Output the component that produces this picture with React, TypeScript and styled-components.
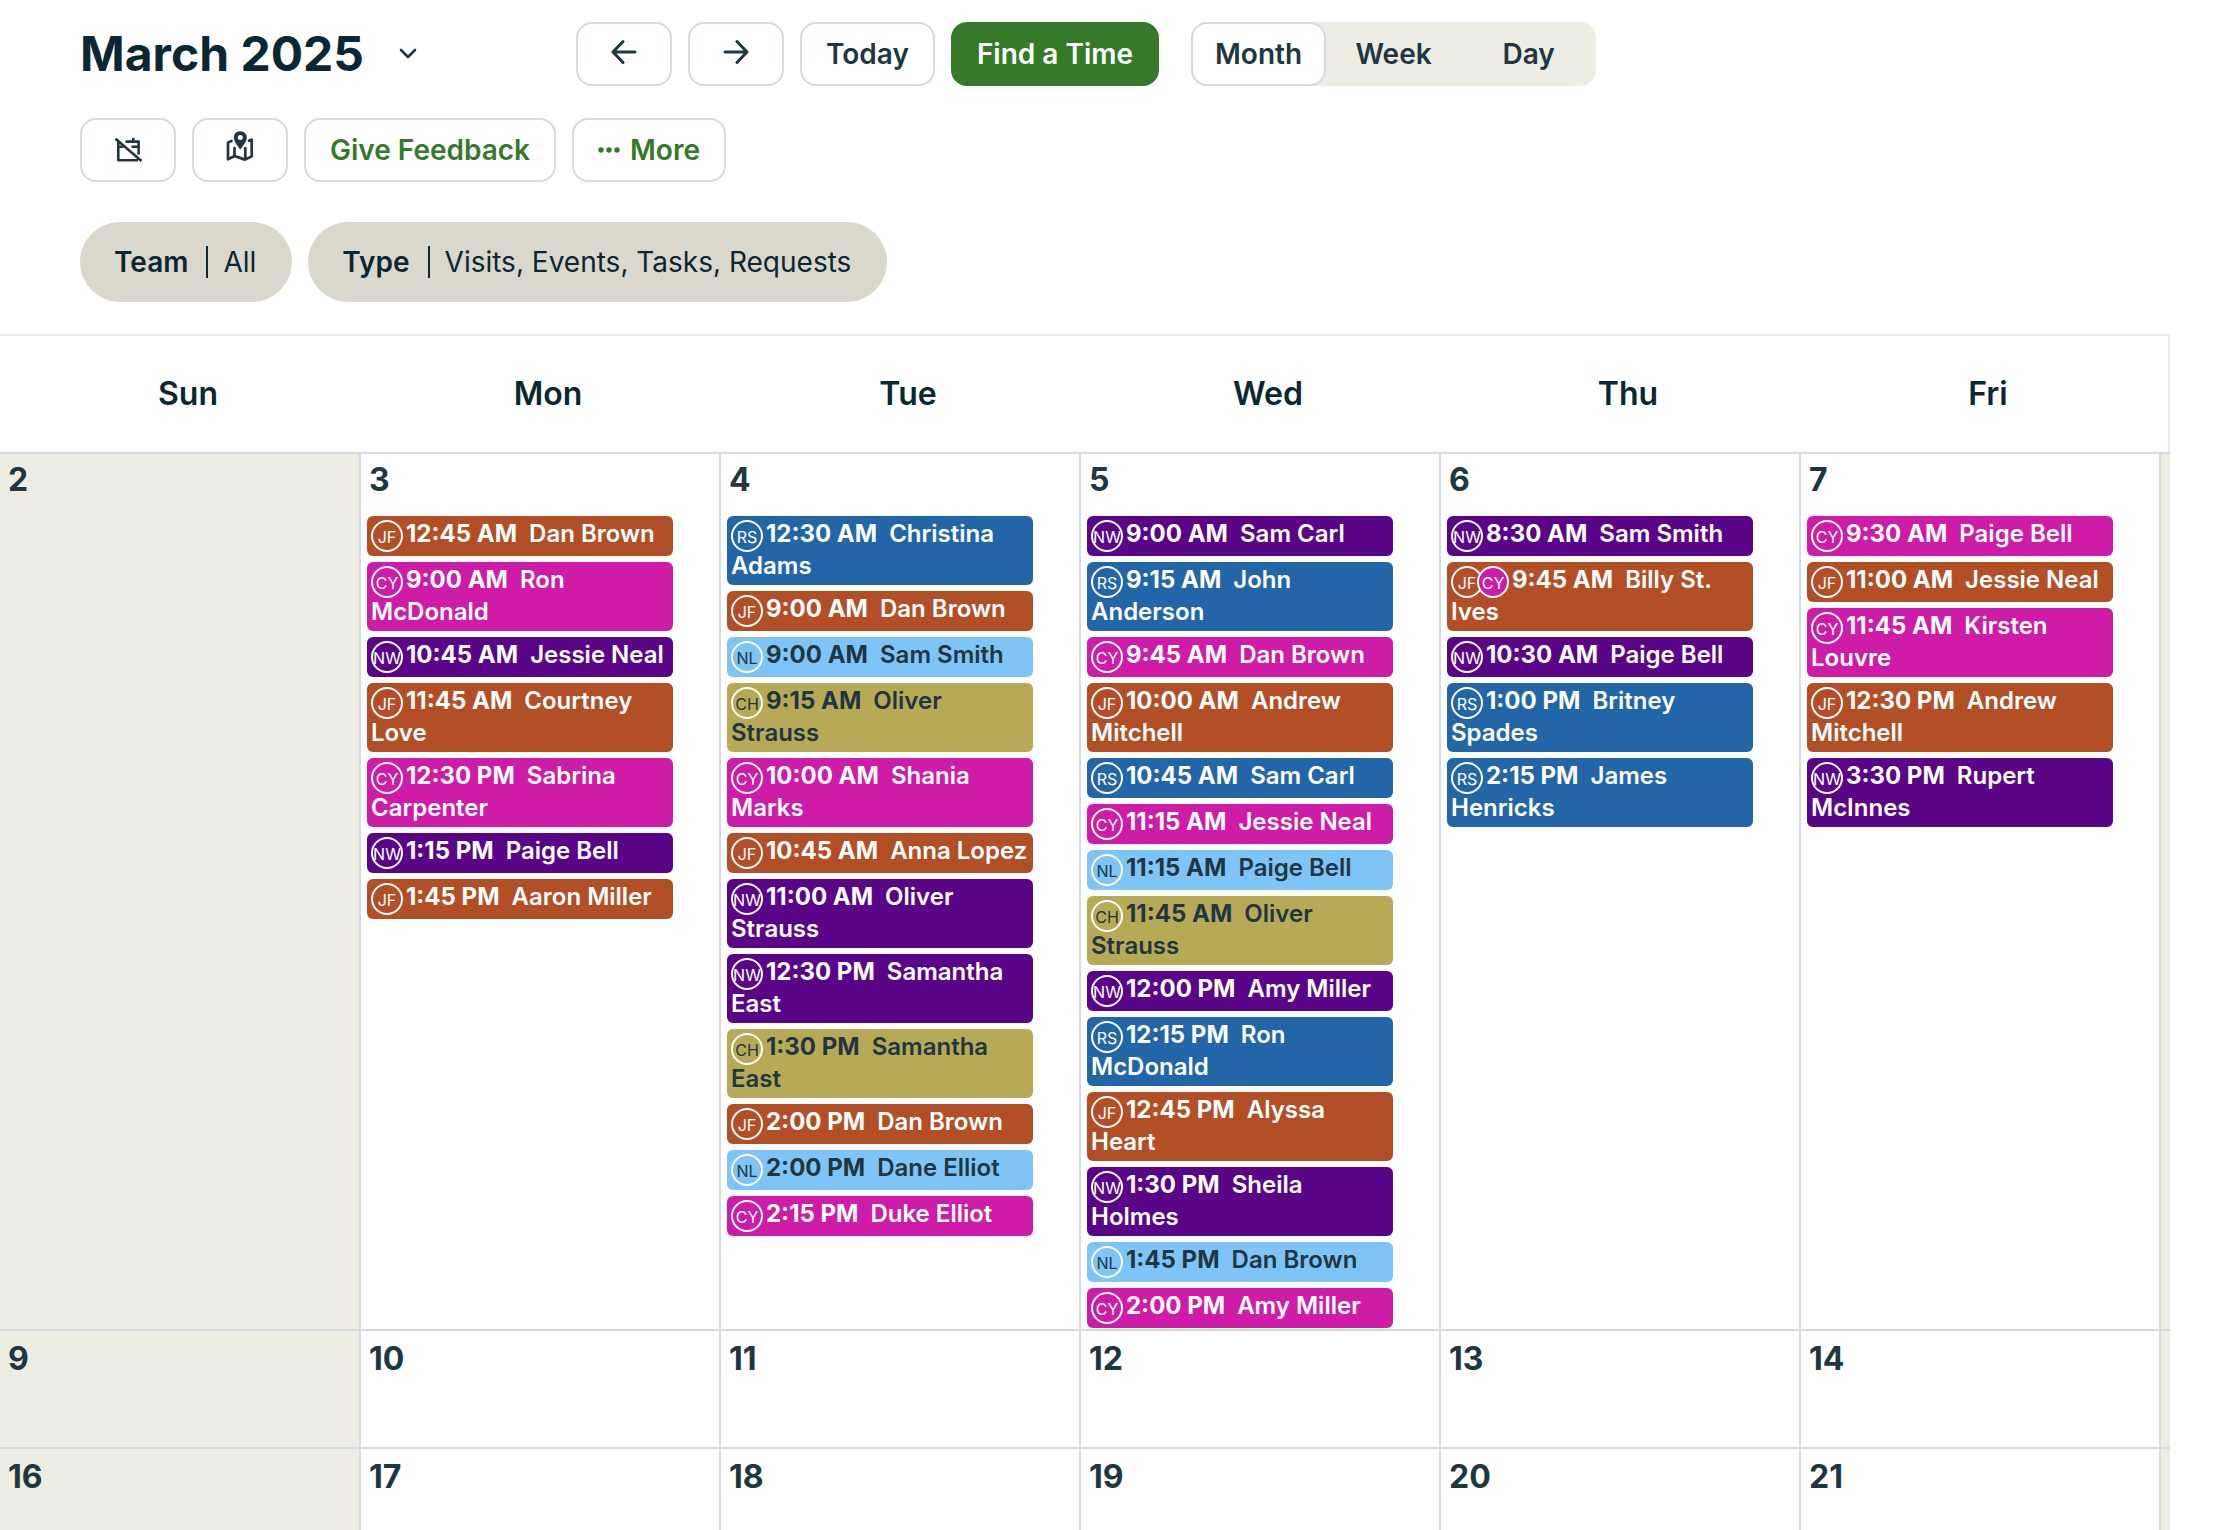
import React from "react";
import styled, { createGlobalStyle } from "styled-components";

const GlobalStyle = createGlobalStyle`
  *, *::before, *::after { box-sizing: border-box; }
  body {
    margin: 0;
    background: #ffffff;
    color: #0b2733;
    font-family: Inter, "Liberation Sans", sans-serif;
  }
  button { font: inherit; color: inherit; cursor: pointer; }
`;

const Page = styled.div`
  display: flex;
  flex-direction: column;
  height: 100vh;
  overflow: hidden;
`;

const Toolbar = styled.header`
  display: flex;
  flex-direction: column;
  padding: 22px 80px 32px;
`;

const TopRow = styled.div`
  display: flex;
  align-items: center;
`;

const MonthPicker = styled.button`
  display: flex;
  align-items: center;
  justify-content: space-between;
  width: 340px;
  margin-right: 156px;
  padding: 0;
  border: 0;
  background: none;
  color: #0b2733;
`;

const Title = styled.h1`
  margin: 0;
  font-size: 48px;
  line-height: 64px;
  font-weight: 700;
  white-space: nowrap;
`;

const ButtonGroup = styled.div`
  display: flex;
  gap: 16px;
`;

const Button = styled.button<{ $tone?: "plain" | "link" | "primary"; $icon?: boolean }>`
  display: inline-flex;
  align-items: center;
  justify-content: center;
  gap: 10px;
  height: 64px;
  width: ${(p) => (p.$icon ? "96px" : "auto")};
  padding: ${(p) => (p.$icon ? "0" : "0 24px")};
  border: 2px solid ${(p) => (p.$tone === "primary" ? "#347a28" : "#d4dadf")};
  border-radius: 16px;
  background: ${(p) => (p.$tone === "primary" ? "#347a28" : "#ffffff")};
  color: ${(p) => (p.$tone === "primary" ? "#ffffff" : p.$tone === "link" ? "#347a28" : "#203640")};
  font-size: 28px;
  line-height: 32px;
  font-weight: 600;
  white-space: nowrap;
`;

const ViewSwitch = styled.div`
  display: grid;
  grid-template-columns: repeat(3, 135px);
  margin-left: 32px;
  border-radius: 16px;
  background: #edede4;
`;

const ViewOption = styled.button<{ $active?: boolean }>`
  height: 64px;
  padding: 0;
  border: 2px solid ${(p) => (p.$active ? "#d4dadf" : "transparent")};
  border-radius: 16px;
  background: ${(p) => (p.$active ? "#ffffff" : "transparent")};
  color: #203640;
  font-size: 28px;
  line-height: 32px;
  font-weight: 600;
`;

const ActionRow = styled.div`
  display: flex;
  gap: 16px;
  margin-top: 32px;
`;

const FilterRow = styled.div`
  display: flex;
  gap: 16px;
  margin-top: 40px;
`;

const FilterPill = styled.button`
  display: flex;
  align-items: center;
  height: 80px;
  padding: 0 36px 0 34px;
  border: 0;
  border-radius: 40px;
  background: #dad8cc;
  color: #0b2733;
  font-size: 28px;
  line-height: 32px;
  white-space: nowrap;
`;

const FilterName = styled.span`
  padding-right: 18px;
  border-right: 2px solid #0b2733;
  font-weight: 600;
`;

const FilterValue = styled.span`
  padding-left: 15px;
`;

const Calendar = styled.main`
  flex: 1;
  min-height: 0;
  margin-right: 68px;
  overflow: hidden;
`;

const WeekdayRow = styled.div`
  display: grid;
  grid-template-columns: repeat(6, 1fr);
  padding-left: 8px;
  border-top: 2px solid #edede4;
  border-right: 2px solid #edede4;
`;

const Weekday = styled.div`
  padding: 38px 0;
  text-align: center;
  font-size: 32px;
  line-height: 40px;
  font-weight: 600;
`;

const Weeks = styled.div`
  border-top: 2px solid #d4dadf;
`;

const Week = styled.div<{ $first?: boolean }>`
  display: grid;
  grid-template-columns: 361fr repeat(5, 360fr) 9px;
  min-height: 118px;
  --day-top: ${(p) => (p.$first ? "6px" : "8px")};
`;

const Day = styled.section<{ $weekend?: boolean }>`
  padding: var(--day-top) 46px 1px 6px;
  border-right: 2px solid #d4dadf;
  border-bottom: 2px solid #d4dadf;
  background: ${(p) => (p.$weekend ? "#edede4" : "#ffffff")};
`;

const WeekendEdge = styled.div`
  border-bottom: 2px solid #d4dadf;
  background: #edede4;
`;

const DayNumber = styled.h2`
  margin: 0;
  padding-left: 2px;
  color: #203640;
  font-size: 32px;
  line-height: 40px;
  font-weight: 700;
`;

const Visits = styled.ul`
  display: flex;
  flex-direction: column;
  gap: 6px;
  margin: 16px 0 0;
  padding: 0;
  list-style: none;
`;

const Visit = styled.li<{ $bg: string; $fg: string }>`
  padding: 3px 4px 5px;
  border-radius: 6px;
  background: ${(p) => p.$bg};
  color: ${(p) => p.$fg};
  font-size: 24px;
  line-height: 29px;
  font-weight: 600;
`;

const Avatars = styled.span`
  display: inline-flex;
  margin: 1px 3px -1px 0;
  vertical-align: top;
`;

const Avatar = styled.span<{ $bg: string }>`
  display: flex;
  align-items: center;
  justify-content: center;
  width: 32px;
  height: 32px;
  padding-top: 2px;
  border: 2px solid #ffffff;
  border-radius: 50%;
  background: ${(p) => p.$bg};
  font-size: 16px;
  line-height: 20px;
  font-weight: 400;
  & + & { margin-left: -6px; }
`;

const Time = styled.span`
  margin-right: 6px;
  font-weight: 700;
  white-space: nowrap;
`;

type Code = "JF" | "CY" | "NW" | "RS" | "NL" | "CH";

const team: Record<Code, { bg: string; fg: string }> = {
  JF: { bg: "#b24f26", fg: "#ffffff" },
  CY: { bg: "#ce1ca8", fg: "#ffffff" },
  NW: { bg: "#5a0587", fg: "#ffffff" },
  RS: { bg: "#2366a8", fg: "#ffffff" },
  NL: { bg: "#7fc4f7", fg: "#203640" },
  CH: { bg: "#b7aa57", fg: "#203640" },
};

type Entry = [Code[], string, string];

const visits: Record<number, Entry[]> = {
  3: [
    [["JF"], "12:45 AM", "Dan Brown"],
    [["CY"], "9:00 AM", "Ron McDonald"],
    [["NW"], "10:45 AM", "Jessie Neal"],
    [["JF"], "11:45 AM", "Courtney Love"],
    [["CY"], "12:30 PM", "Sabrina Carpenter"],
    [["NW"], "1:15 PM", "Paige Bell"],
    [["JF"], "1:45 PM", "Aaron Miller"],
  ],
  4: [
    [["RS"], "12:30 AM", "Christina Adams"],
    [["JF"], "9:00 AM", "Dan Brown"],
    [["NL"], "9:00 AM", "Sam Smith"],
    [["CH"], "9:15 AM", "Oliver Strauss"],
    [["CY"], "10:00 AM", "Shania Marks"],
    [["JF"], "10:45 AM", "Anna Lopez"],
    [["NW"], "11:00 AM", "Oliver Strauss"],
    [["NW"], "12:30 PM", "Samantha East"],
    [["CH"], "1:30 PM", "Samantha East"],
    [["JF"], "2:00 PM", "Dan Brown"],
    [["NL"], "2:00 PM", "Dane Elliot"],
    [["CY"], "2:15 PM", "Duke Elliot"],
  ],
  5: [
    [["NW"], "9:00 AM", "Sam Carl"],
    [["RS"], "9:15 AM", "John Anderson"],
    [["CY"], "9:45 AM", "Dan Brown"],
    [["JF"], "10:00 AM", "Andrew Mitchell"],
    [["RS"], "10:45 AM", "Sam Carl"],
    [["CY"], "11:15 AM", "Jessie Neal"],
    [["NL"], "11:15 AM", "Paige Bell"],
    [["CH"], "11:45 AM", "Oliver Strauss"],
    [["NW"], "12:00 PM", "Amy Miller"],
    [["RS"], "12:15 PM", "Ron McDonald"],
    [["JF"], "12:45 PM", "Alyssa Heart"],
    [["NW"], "1:30 PM", "Sheila Holmes"],
    [["NL"], "1:45 PM", "Dan Brown"],
    [["CY"], "2:00 PM", "Amy Miller"],
  ],
  6: [
    [["NW"], "8:30 AM", "Sam Smith"],
    [["JF", "CY"], "9:45 AM", "Billy St. Ives"],
    [["NW"], "10:30 AM", "Paige Bell"],
    [["RS"], "1:00 PM", "Britney Spades"],
    [["RS"], "2:15 PM", "James Henricks"],
  ],
  7: [
    [["CY"], "9:30 AM", "Paige Bell"],
    [["JF"], "11:00 AM", "Jessie Neal"],
    [["CY"], "11:45 AM", "Kirsten Louvre"],
    [["JF"], "12:30 PM", "Andrew Mitchell"],
    [["NW"], "3:30 PM", "Rupert McInnes"],
  ],
};

const weekdays = ["Sun", "Mon", "Tue", "Wed", "Thu", "Fri"];
const weekStarts = [2, 9, 16];

const ArrowIcon = ({ right }: { right?: boolean }) => (
  <svg width="32" height="36" viewBox="0 0 32 36" fill="none" stroke="currentColor" strokeWidth="3" strokeLinecap="round" strokeLinejoin="round" aria-hidden="true">
    {right ? <path d="M5 16H27M17 5.500L27 16 17 26.500" /> : <path d="M27 16H5M15 5.500L5 16l10 10.500" />}
  </svg>
);

const ChevronIcon = () => (
  <svg width="24" height="24" viewBox="0 0 24 24" fill="none" stroke="#203640" strokeWidth="2.6" strokeLinecap="round" strokeLinejoin="round" aria-hidden="true">
    <path d="M5 8l7 7 7-7" />
  </svg>
);

const CalendarOffIcon = () => (
  <svg width="32" height="32" viewBox="0 0 32 32" fill="none" stroke="currentColor" strokeWidth="2.6" strokeLinejoin="round" aria-hidden="true">
    <path d="M3.500 4.800L29.500 27" />
    <path d="M6.300 7.500V26.300H26" />
    <path d="M13.500 7.600H26.600V20.500M21.300 4V8M6 12.700H11.500M19.500 12.700H26.600" />
  </svg>
);

const MapIcon = () => (
  <svg width="32" height="40" viewBox="0 -2 32 40" fill="none" aria-hidden="true">
    <path d="M7.500 9L4 10.500V27.300l6.500-3.300L21 27.600l6.700-3.200V7.600L25 8.700M10.500 16v8M21.300 16v11.500" stroke="currentColor" strokeWidth="2.700" strokeLinejoin="round" strokeLinecap="round" />
    <path fillRule="evenodd" d="M16.300-.8c-3.800 0-6.500 2.800-6.500 6.200 0 4.400 4 8.200 6.500 12.200 2.500-4 6.500-7.800 6.500-12.200 0-3.400-2.700-6.200-6.500-6.200zm0 3.700a2.500 2.500 0 1 1 0 5 2.500 2.500 0 0 1 0-5z" fill="currentColor" />
  </svg>
);

const DotsIcon = () => (
  <svg width="22" height="8" viewBox="0 0 22 8" fill="currentColor" aria-hidden="true">
    <circle cx="3" cy="4" r="2.700" />
    <circle cx="11" cy="4" r="2.700" />
    <circle cx="19" cy="4" r="2.700" />
  </svg>
);

const VisitCard = ({ entry }: { entry: Entry }) => {
  const [codes, time, name] = entry;
  const lead = team[codes[0]];
  return (
    <Visit $bg={lead.bg} $fg={lead.fg}>
      <Avatars>
        {codes.map((code) => (
          <Avatar key={code} $bg={team[code].bg}>{code}</Avatar>
        ))}
      </Avatars>
      <Time>{time}</Time> {name}
    </Visit>
  );
};

export default function App() {
  return (
    <>
      <GlobalStyle />
      <Page>
        <Toolbar>
          <TopRow>
            <MonthPicker aria-label="Choose month">
              <Title>March 2025</Title>
              <ChevronIcon />
            </MonthPicker>
            <ButtonGroup>
              <Button $icon aria-label="Previous month"><ArrowIcon /></Button>
              <Button $icon aria-label="Next month"><ArrowIcon right /></Button>
              <Button>Today</Button>
              <Button $tone="primary">Find a Time</Button>
            </ButtonGroup>
            <ViewSwitch>
              <ViewOption $active aria-pressed="true">Month</ViewOption>
              <ViewOption>Week</ViewOption>
              <ViewOption>Day</ViewOption>
            </ViewSwitch>
          </TopRow>
          <ActionRow>
            <Button $icon aria-label="Hide unscheduled"><CalendarOffIcon /></Button>
            <Button $icon aria-label="Show map"><MapIcon /></Button>
            <Button $tone="link">Give Feedback</Button>
            <Button $tone="link"><DotsIcon />More</Button>
          </ActionRow>
          <FilterRow>
            <FilterPill>
              <FilterName>Team</FilterName>
              <FilterValue>All</FilterValue>
            </FilterPill>
            <FilterPill>
              <FilterName>Type</FilterName>
              <FilterValue>Visits, Events, Tasks, Requests</FilterValue>
            </FilterPill>
          </FilterRow>
        </Toolbar>
        <Calendar>
          <WeekdayRow>
            {weekdays.map((day) => <Weekday key={day}>{day}</Weekday>)}
          </WeekdayRow>
          <Weeks>
            {weekStarts.map((start, row) => (
              <Week key={start} $first={row === 0}>
                {weekdays.map((day, i) => (
                  <Day key={day} $weekend={i === 0}>
                    <DayNumber>{start + i}</DayNumber>
                    {visits[start + i] && (
                      <Visits>
                        {visits[start + i].map((entry) => (
                          <VisitCard key={entry[1] + entry[2]} entry={entry} />
                        ))}
                      </Visits>
                    )}
                  </Day>
                ))}
                <WeekendEdge />
              </Week>
            ))}
          </Weeks>
        </Calendar>
      </Page>
    </>
  );
}
